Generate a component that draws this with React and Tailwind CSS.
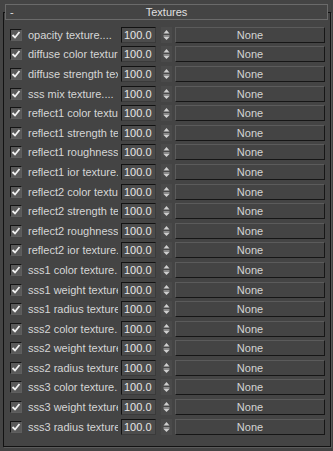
import React from 'react';

const rows = [
    'opacity texture....',
    'diffuse color texture',
    'diffuse strength texture',
    'sss mix texture....',
    'reflect1 color texture',
    'reflect1 strength texture',
    'reflect1 roughness texture',
    'reflect1 ior texture....',
    'reflect2 color texture',
    'reflect2 strength texture',
    'reflect2 roughness texture',
    'reflect2 ior texture....',
    'sss1 color texture....',
    'sss1 weight texture',
    'sss1 radius texture',
    'sss2 color texture....',
    'sss2 weight texture',
    'sss2 radius texture',
    'sss3 color texture....',
    'sss3 weight texture',
    'sss3 radius texture',
];

const CheckBox = () => (
    <div className="w-[12px] h-[12px] border border-t-[#141414] border-l-[#141414] border-b-[#5e5e5e] border-r-[#5e5e5e] bg-[#5a5a5a] flex items-center justify-center">
        <svg width="10" height="10" viewBox="0 0 10 10">
            <path d="M1.5 5 L4 7.5 L8.5 2" stroke="#f2f2f2" strokeWidth="1.8" fill="none" />
        </svg>
    </div>
);

const Spinner = () => (
    <div className="w-[11px] h-[16px] ml-[5px] bg-[#4a4a4a] flex items-center justify-center">
        <svg width="11" height="16" viewBox="0 0 11 16">
            <path d="M5.5 3 L8.5 6.5 L2.5 6.5 Z" fill="#cfcfcf" />
            <line x1="2.5" y1="9" x2="8.5" y2="9" stroke="#cfcfcf" strokeWidth="1" />
            <path d="M2.5 10 L8.5 10 L5.5 13 Z" fill="#cfcfcf" />
        </svg>
    </div>
);

const Row = ({ label }) => (
    <div className="flex items-center h-[19.6px]">
        <div className="w-[6px]" />
        <CheckBox />
        <div className="w-[90px] ml-[6px] overflow-hidden whitespace-nowrap text-[#d6d6d6] leading-[16px]">
            {label}
        </div>
        <div className="w-[35px] h-[16px] ml-[3px] border border-t-[#121212] border-l-[#121212] border-b-[#3a3a3a] border-r-[#3a3a3a] bg-[#4c4c4c] text-[#e6e6e6] leading-[14px] pl-[2px]">
            100.0
        </div>
        <Spinner />
        <div className="w-[150px] h-[16px] ml-[3px] border border-t-[#5b5b5b] border-l-[#5b5b5b] border-b-[#161616] border-r-[#161616] bg-[#444444] text-[#d4d4d4] leading-[14px] text-center">
            None
        </div>
    </div>
);

export default function App() {
    return (
        <div
            className="w-[333px] h-[451px] bg-[#444444] pt-[12px] overflow-hidden text-[11px]"
            style={{ fontFamily: '"Liberation Sans", Arial, sans-serif' }}
        >
            <div className="ml-[3px] w-[328px] h-[435px] border border-[#121212] shadow-[1px_1px_0_#5a5a5a]">
                <div className="-mt-[9px] ml-[1px] w-[323px] h-[16px] border border-[#6a6a6a] bg-[#444444] flex items-center relative">
                    <span className="absolute left-[4px] top-[-1px] text-[#e0e0e0]">-</span>
                    <span className="flex-1 text-center text-[#e0e0e0] leading-[14px]">Textures</span>
                </div>
                <div className="mt-[5px]">
                    {rows.map((r, i) => (
                        <Row key={i} label={r} />
                    ))}
                </div>
            </div>
        </div>
    );
}
